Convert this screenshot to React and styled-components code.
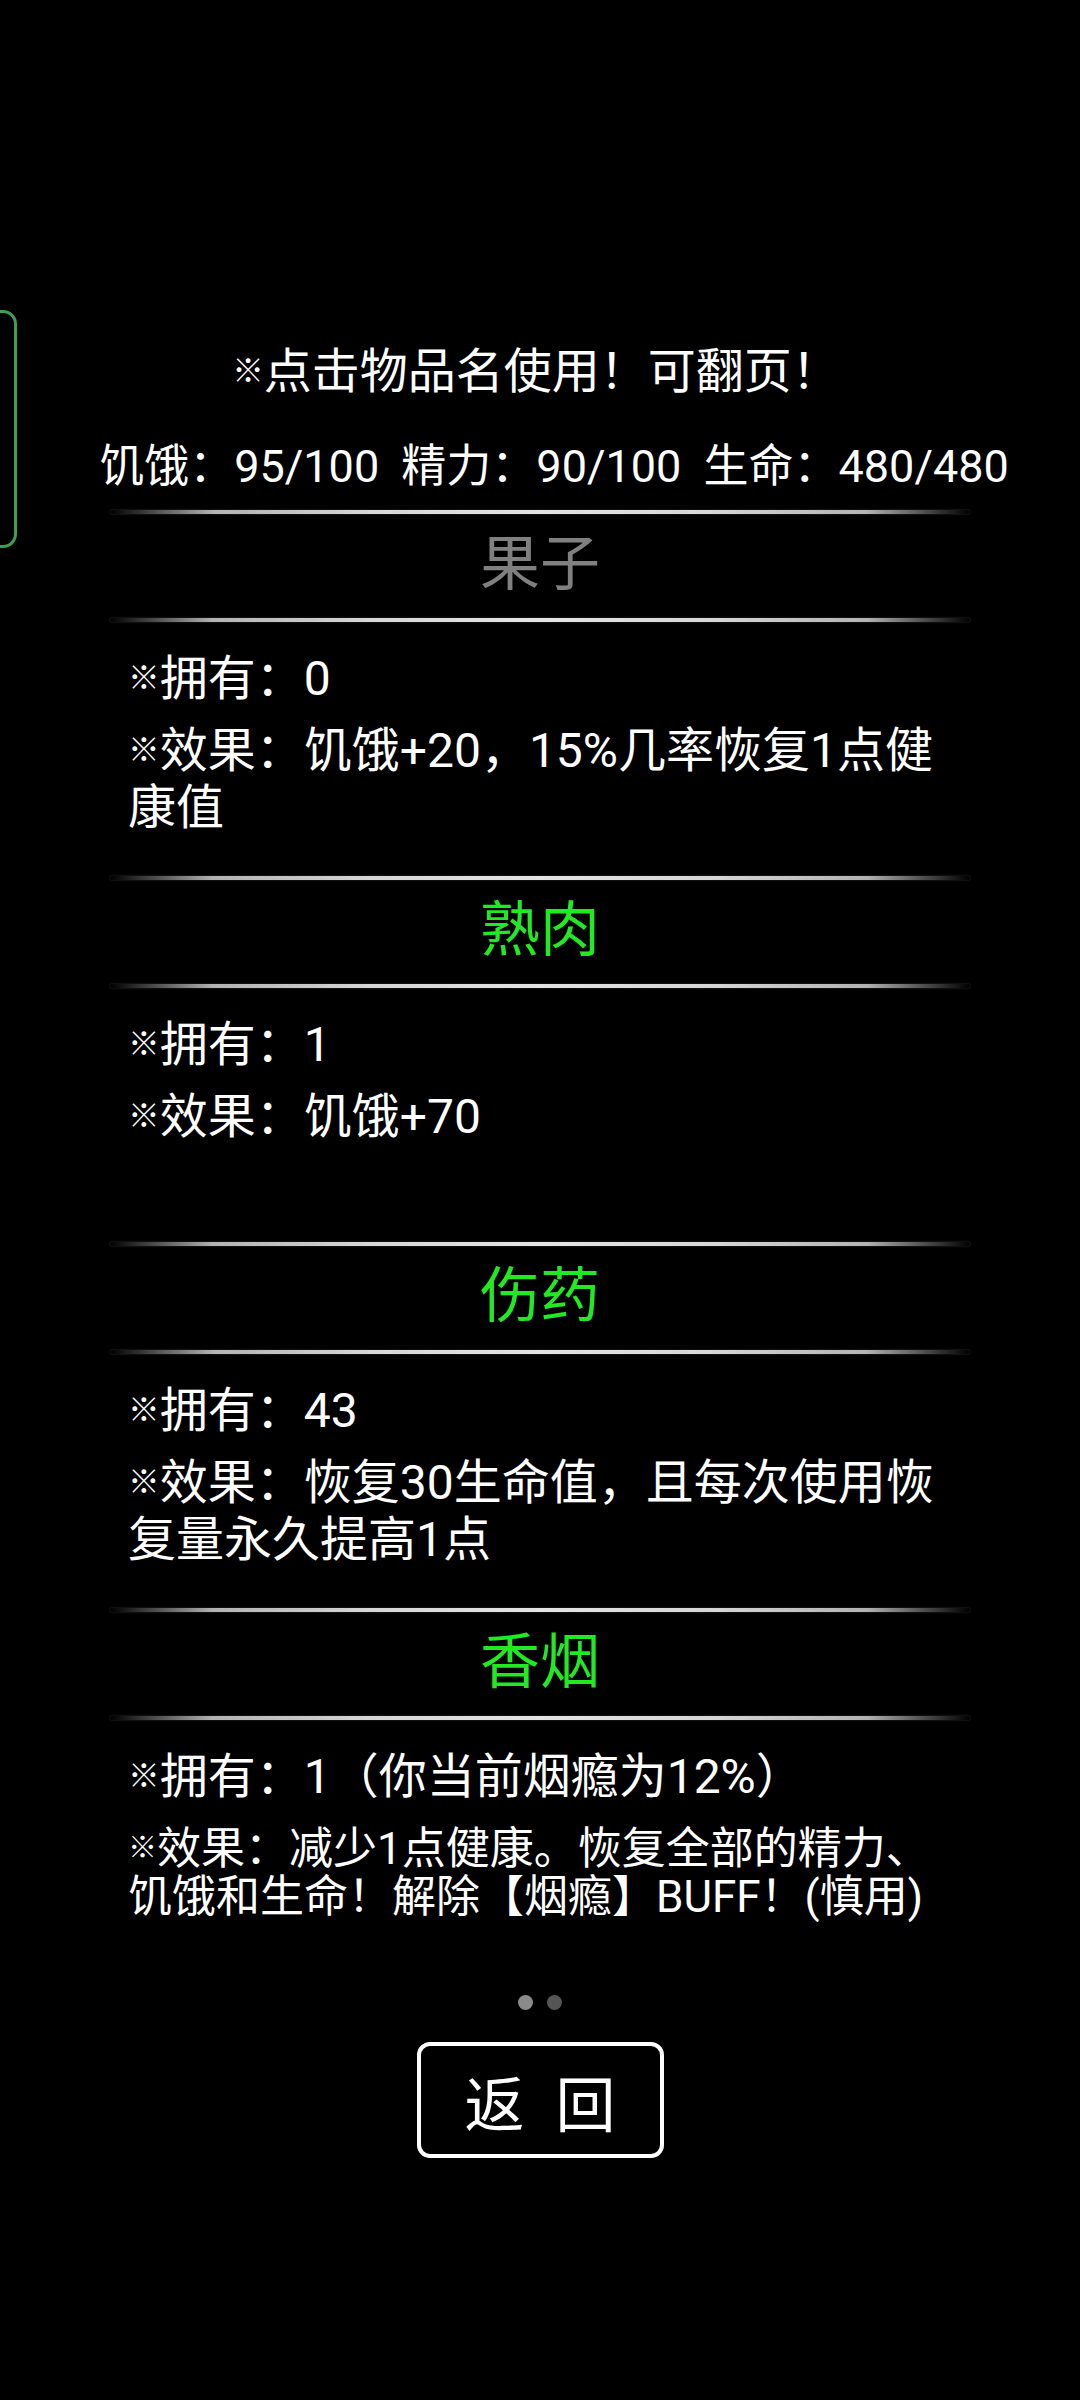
import React from "react";
import styled, { createGlobalStyle } from "styled-components";

const GlobalStyle = createGlobalStyle`
  html, body {
    margin: 0;
    padding: 0;
    background: #000;
  }
  body {
    font-family: Roboto, "Noto Sans CJK SC", sans-serif;
    color: #fff;
  }
`;

const Page = styled.div`
  position: relative;
  width: 1080px;
  min-height: 2400px;
  background: #000;
  padding-top: 340px;
  box-sizing: border-box;
  display: flex;
  flex-direction: column;
  align-items: center;
  overflow: hidden;
`;

const SideTab = styled.div`
  position: absolute;
  left: -20px;
  top: 310px;
  width: 37px;
  height: 238px;
  box-sizing: border-box;
  border: 3px solid #3f9e52;
  border-radius: 14px;
`;

const Hint = styled.div`
  font-size: 48px;
  line-height: 57px;
  color: #fff;
  text-align: center;
  padding-right: 8px;
`;

const Stats = styled.div`
  margin-top: 41px;
  padding-left: 28px;
  font-size: 45px;
  line-height: 52px;
  color: #fff;
  text-align: center;
  word-spacing: 11px;
  white-space: nowrap;
`;

const Mark = styled.span`
  font-family: "Noto Sans CJK SC", sans-serif;
  font-size: 0.66em;
  font-weight: 700;
  vertical-align: 0.2em;
`;

const List = styled.div`
  margin-top: 17px;
  width: 860px;
  display: flex;
  flex-direction: column;
`;

const Divider = styled.div`
  height: 4px;
  border-radius: 2px;
  background: linear-gradient(
    to right,
    rgba(210, 210, 210, 0) 0%,
    rgba(210, 210, 210, 0.35) 5%,
    rgba(210, 210, 210, 0.85) 12%,
    #d6d6d6 30%,
    #e4e4e4 50%,
    #d6d6d6 70%,
    rgba(210, 210, 210, 0.85) 88%,
    rgba(210, 210, 210, 0.35) 95%,
    rgba(210, 210, 210, 0) 100%
  );
  box-shadow: 0 0 2px rgba(180, 180, 180, 0.35);
`;

const ItemHeader = styled.div`
  height: 104px;
  box-sizing: border-box;
  padding-bottom: 2px;
  display: flex;
  align-items: center;
  justify-content: center;
  font-size: 60px;
  line-height: 1;
  color: ${(p) => p.$color};
`;

const ItemBody = styled.div`
  height: 254px;
  box-sizing: border-box;
  padding: 25px 20px 0 18px;
`;

const Para = styled.p`
  margin: ${(p) => (p.$first ? "0" : p.$small ? "15px 0 0" : "11px 0 0")};
  font-size: ${(p) => (p.$small ? "44px" : "48px")};
  line-height: ${(p) => (p.$small ? "49px" : "57px")};
  color: #fff;
`;

const Dots = styled.div`
  margin-top: 21px;
  display: flex;
  gap: 14px;
  justify-content: center;
`;

const Dot = styled.span`
  width: 15px;
  height: 15px;
  border-radius: 50%;
  background: ${(p) => (p.$active ? "#8a8a8a" : "#555")};
`;

const BackButton = styled.button`
  margin-top: 32px;
  width: 247px;
  height: 116px;
  box-sizing: border-box;
  border: 4px solid #fff;
  border-radius: 13px;
  background: #000;
  color: #fff;
  font-family: Roboto, "Noto Sans CJK SC", sans-serif;
  font-size: 60px;
  word-spacing: 16px;
  display: flex;
  align-items: center;
  justify-content: center;
  padding: 0;
`;

const items = [
  {
    name: "果子",
    color: "#808080",
    own: "0",
    effect: "饥饿+20，15%几率恢复1点健康值",
  },
  { name: "熟肉", color: "#22ea22", own: "1", effect: "饥饿+70" },
  {
    name: "伤药",
    color: "#22ea22",
    own: "43",
    effect: "恢复30生命值，且每次使用恢复量永久提高1点",
  },
  {
    name: "香烟",
    color: "#22ea22",
    own: "1（你当前烟瘾为12%）",
    effect: "减少1点健康。恢复全部的精力、饥饿和生命！解除【烟瘾】BUFF！(慎用)",
    small: true,
  },
];

export default function App() {
  return (
    <>
      <GlobalStyle />
      <Page>
        <SideTab />
        <Hint>
          <Mark>※</Mark>点击物品名使用！可翻页！
        </Hint>
        <Stats>饥饿：95/100 精力：90/100 生命：480/480</Stats>
        <List>
          {items.map((it) => (
            <React.Fragment key={it.name}>
              <Divider />
              <ItemHeader $color={it.color}>{it.name}</ItemHeader>
              <Divider />
              <ItemBody>
                <Para $first>
                  <Mark>※</Mark>拥有：{it.own}
                </Para>
                <Para $small={it.small}>
                  <Mark>※</Mark>效果：{it.effect}
                </Para>
              </ItemBody>
            </React.Fragment>
          ))}
        </List>
        <Dots>
          <Dot $active />
          <Dot />
        </Dots>
        <BackButton>返 回</BackButton>
      </Page>
    </>
  );
}
